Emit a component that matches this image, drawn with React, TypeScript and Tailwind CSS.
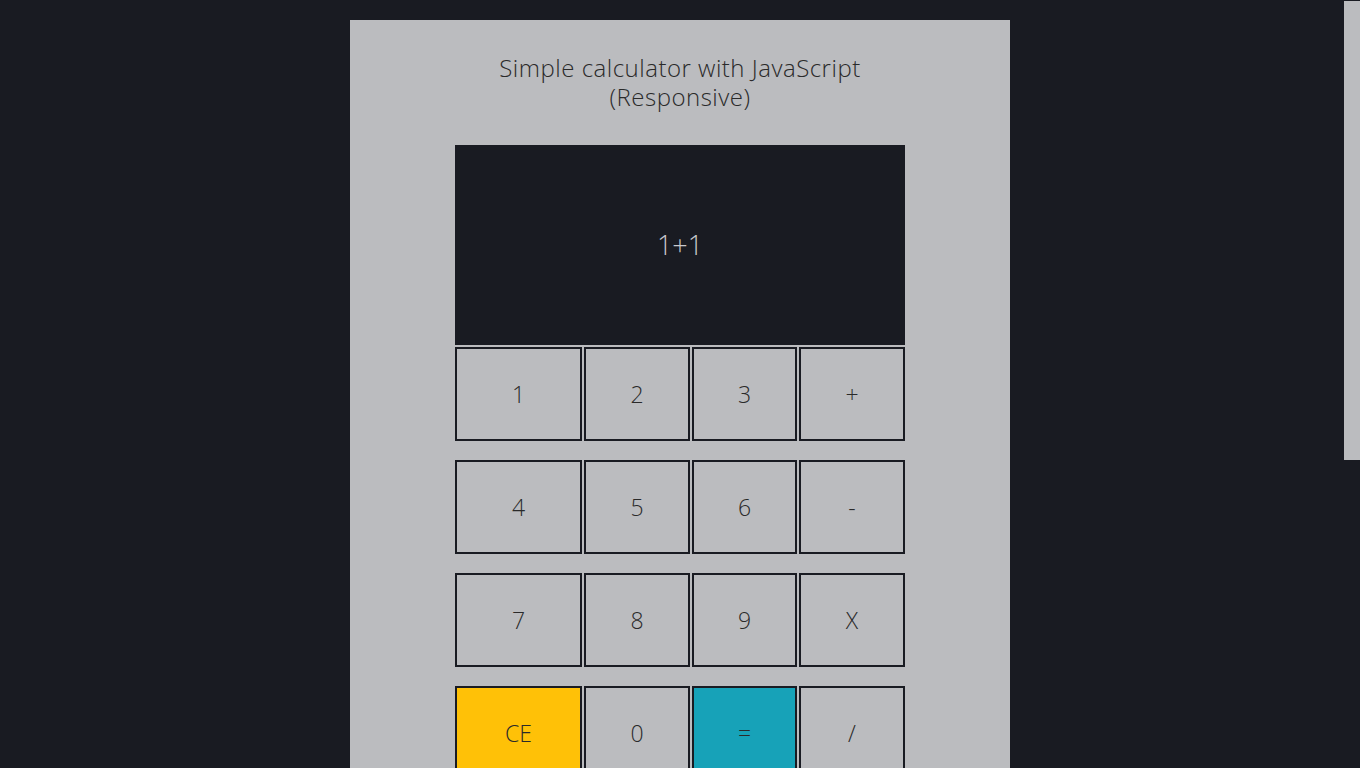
import React from "react";

const rows = [
  ["1", "2", "3", "+"],
  ["4", "5", "6", "-"],
  ["7", "8", "9", "X"],
  ["CE", "0", "=", "/"],
];

function keyColor(k: string) {
  if (k === "CE") return "bg-[#ffc107]";
  if (k === "=") return "bg-[#17a2b8]";
  return "bg-[#bbbcbf]";
}

export default function App() {
  return (
    <div
      className="min-h-screen bg-[#191b22] text-[#2b2b2b]"
      style={{ fontFamily: "'Open Sans', 'Noto Sans', sans-serif" }}
    >
      <div className="pt-5 pb-5">
        <div className="mx-auto w-[660px] min-h-[1245px] bg-[#bbbcbf] pt-[33px]">
          <h1 className="text-center text-[24px] leading-[29px] tracking-[0.5px] font-light text-[#2a2a2a]">
            Simple calculator with JavaScript
            <br />
            (Responsive)
          </h1>

          <div className="mx-auto mt-[34px] w-[450px]">
            <div className="flex h-[200px] items-center justify-center bg-[#191b22] text-[27px] font-light text-[#c8c8cc]">
              1+1
            </div>

            <div className="mt-[2px] flex flex-col gap-[19px]">
              {rows.map((row, i) => (
                <div key={i} className="grid grid-cols-[127px_106px_105px_106px] gap-[2px]">
                  {row.map((k) => (
                    <button
                      key={k}
                      className={`h-[94px] border-2 border-[#191b22] ${keyColor(k)} text-[23px] font-light text-[#2a2a2a]`}
                    >
                      {k}
                    </button>
                  ))}
                </div>
              ))}
            </div>
          </div>
        </div>
      </div>

      {/* page scrollbar thumb */}
      <div className="fixed right-0 top-[1px] h-[459px] w-4 bg-[#bbbcbf]" />
    </div>
  );
}
